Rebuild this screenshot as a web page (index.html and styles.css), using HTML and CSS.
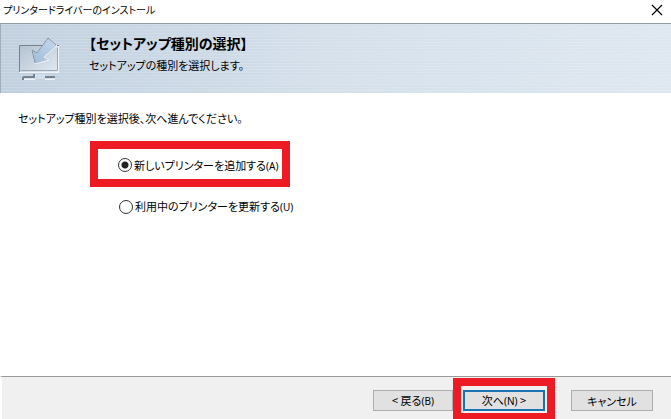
FILE: index.html
```html
<!DOCTYPE html>
<html lang="ja">
<head>
  <meta charset="UTF-8" />
  <meta name="viewport" content="width=device-width, initial-scale=1" />
  <title>プリンタードライバーのインストール</title>
  <link rel="stylesheet" href="styles.css">
</head>
<body>

<div class="titlebar">
  <span>プリンタードライバーのインストール</span>
  <button type="button" class="close" aria-label="閉じる">
    <svg width="12" height="12" viewBox="0 0 12 12"><path d="M1 1L11 11M11 1L1 11" stroke="#000" stroke-width="1.2"/></svg>
  </button>
</div>

<header>
  <svg class="icon" width="44" height="46" viewBox="0 0 44 46">
    <defs>
      <linearGradient id="screen" x1="0" y1="0" x2="1" y2="1">
        <stop offset="0" stop-color="#b3c1d0"/>
        <stop offset="1" stop-color="#e2eaf2"/>
      </linearGradient>
      <linearGradient id="arrow" x1="1" y1="0" x2="0" y2="1">
        <stop offset="0" stop-color="#c6d9ec"/>
        <stop offset="1" stop-color="#9fbbd9"/>
      </linearGradient>
    </defs>
    <path d="M0.5 8.5H39.5V35.5H0.5Z" fill="url(#screen)" stroke="#f0f4f8" stroke-width="1"/>
    <path d="M0.5 35V8.5H23M36 8.5H40" fill="none" stroke="#76838f" stroke-width="1"/>
    <path d="M2 33.5H38.5V11" fill="none" stroke="#98a8b8" stroke-width="1"/>
    <path d="M4 42V40H15V37H26V40H36V42Z" fill="#d3dfea"/>
    <path d="M4 40H15V37M26 40H36M4 43V40" fill="none" stroke="#76838f" stroke-width="2"/>
    <path d="M5 42.5H16M26 42.5H36" fill="none" stroke="#f0f4f8" stroke-width="1"/>
    <path d="M29 1L38 9L25 20L30 23L16 27L13 13L18 16Z" fill="url(#arrow)" stroke="#edf2f7" stroke-width="1"/>
    <path d="M16 26L13 13L18 16L29 1L37 8" fill="none" stroke="#7d8fa2" stroke-width="1"/>
  </svg>
  <div>
    <h1>【セットアップ種別の選択】</h1>
    <p>セットアップの種別を選択します。</p>
  </div>
</header>

<main>
  <p>セットアップ種別を選択後、次へ進んでください。</p>
  <div class="options">
    <label class="option marked"><input type="radio" name="setup" checked><span>新しいプリンターを追加する<small>(A)</small></span></label>
    <label class="option"><input type="radio" name="setup"><span>利用中のプリンターを更新する<small>(U)</small></span></label>
  </div>
</main>

<footer>
  <button type="button">&lt; 戻る<small>(B)</small></button>
  <div class="marked">
    <button type="button" class="next">次へ<small>(N)</small> &gt;</button>
  </div>
  <button type="button" class="cancel">キャンセル</button>
</footer>

</body>
</html>
```

FILE: styles.css
```css
* {
  box-sizing: border-box;
}
body {
  display: flex;
  flex-direction: column;
  min-height: 100vh;
  margin: 0;
  background-color: #fff;
  color: #000;
  font-family: "Noto Sans CJK JP", sans-serif;
  font-feature-settings: "palt";
  font-size: 11px;
  line-height: 18px;
}
h1, p {
  margin: 0;
}
button, input {
  font: inherit;
  font-feature-settings: inherit;
  color: inherit;
}
small {
  font-family: "Noto Sans", sans-serif;
  font-size: 10px;
}
.titlebar {
  display: flex;
  justify-content: space-between;
  align-items: center;
  height: 23px;
  padding: 0 8px 4px 3px;
  font-size: 10px;
}
.close {
  display: flex;
  padding: 0;
  border: 0;
  background: none;
}
header {
  display: flex;
  gap: 26px;
  height: 70px;
  padding: 9px 18px;
  border-top: 1px solid #919ba5;
  border-left: 1px solid #a3adb8;
  background:
    repeating-linear-gradient(rgba(255,255,255,0.14) 0 1px, transparent 1px 3px),
    linear-gradient(90deg, #c1d0df, #d5e0eb 50%, #dee7f0);
}
.icon {
  margin-top: 4px;
}
h1 {
  font-size: 14px;
  line-height: 20px;
}
header p {
  line-height: 24px;
}
main {
  flex: 1;
  padding: 16px 18px;
}
.options {
  display: flex;
  flex-direction: column;
  align-items: flex-start;
  padding: 14px 72px;
}
.marked {
  border: 8px solid #ed1c24;
}
/* オプション */
.option {
  display: flex;
  align-items: center;
  gap: 2px;
  padding: 10px 29px;
  white-space: nowrap;
}
.option.marked {
  width: 200px;
  height: 46px;
  padding: 2px 20px 0;
}
input {
  appearance: none;
  flex: none;
  width: 14px;
  height: 14px;
  margin: 0;
  border: 1px solid #333;
  border-radius: 50%;
  background-color: #fff;
}
input:checked {
  background: radial-gradient(circle, #222 3px, transparent 4px);
}
/* ボタン */
footer {
  display: flex;
  justify-content: flex-end;
  align-items: flex-start;
  height: 43px;
  padding: 1px 18px 0 0;
  border-top: 1px solid #999;
  border-left: 2px solid #fff;
  background-color: #f0f0f0;
}
footer button {
  width: 82px;
  height: 21px;
  margin-top: 12px;
  padding: 0;
  border: 1px solid #adadad;
  background-color: #e1e1e1;
  line-height: 18px;
}
footer > button:first-child {
  width: 80px;
}
footer .marked {
  height: 41px;
  padding: 4px 2px 0;
  border-bottom-width: 6px;
}
footer .next {
  display: block;
  margin: 0;
  border: 2px solid #1a73b5;
  line-height: 16px;
}
footer .cancel {
  margin-left: 16px;
}
```
